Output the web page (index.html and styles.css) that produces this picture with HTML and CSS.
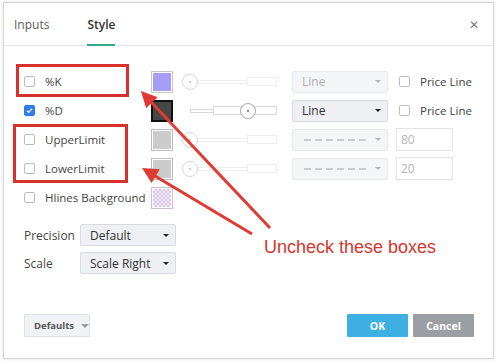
FILE: index.html
```html
<!DOCTYPE html>
<html lang="en">
<head>
    <meta charset="UTF-8">
    <title>Stochastic - Style</title>
    <link rel="stylesheet" href="styles.css">
</head>
<body>
    <div class="dialog">
        <div class="tabs">
            <span class="tab">Inputs</span>
            <span class="tab active">Style</span>
            <span class="close">&#x2715;</span>
        </div>

        <div class="content">
            <div class="row off">
                <label class="check"><span class="box"></span>%K</label>
                <span class="swatch purple"><i></i></span>
                <div class="slider">
                    <span class="thin" style="width: 57px"></span><span class="thick"></span>
                    <span class="knob" style="left: 0"></span>
                </div>
                <div class="select">Line<b class="caret"></b></div>
                <label class="check price"><span class="box"></span>Price Line</label>
            </div>
            <div class="row">
                <label class="check"><span class="box checked"><svg viewBox="0 0 12 12"><path d="M2.6 6.2l2.3 2.3 4.5-5" /></svg></span>%D</label>
                <span class="swatch dark"><i></i></span>
                <div class="slider">
                    <span class="thin" style="width: 23px"></span><span class="thick"></span>
                    <span class="knob" style="left: 58px"></span>
                </div>
                <div class="select">Line<b class="caret"></b></div>
                <label class="check price"><span class="box"></span>Price Line</label>
            </div>
            <div class="row off">
                <label class="check"><span class="box"></span>UpperLimit</label>
                <span class="swatch grey"><i></i></span>
                <div class="slider">
                    <span class="thin" style="width: 57px"></span><span class="thick"></span>
                    <span class="knob" style="left: 0"></span>
                </div>
                <div class="select"><span class="dashes"></span><b class="caret"></b></div>
                <span class="num">80</span>
            </div>
            <div class="row off">
                <label class="check"><span class="box"></span>LowerLimit</label>
                <span class="swatch grey"><i></i></span>
                <div class="slider">
                    <span class="thin" style="width: 57px"></span><span class="thick"></span>
                    <span class="knob" style="left: 0"></span>
                </div>
                <div class="select"><span class="dashes"></span><b class="caret"></b></div>
                <span class="num">20</span>
            </div>
            <div class="row">
                <label class="check"><span class="box"></span>Hlines Background</label>
                <span class="swatch checker"><i></i></span>
            </div>

            <div class="settings">
                <div class="setting">
                    <span class="setting-label">Precision</span>
                    <div class="select">Default<b class="caret"></b></div>
                </div>
                <div class="setting">
                    <span class="setting-label">Scale</span>
                    <div class="select">Scale Right<b class="caret"></b></div>
                </div>
            </div>
        </div>

        <div class="footer">
            <button class="btn defaults">Defaults<b class="caret"></b></button>
            <button class="btn ok">OK</button>
            <button class="btn cancel">Cancel</button>
        </div>
    </div>

    <!-- annotation layer -->
    <svg class="notes" width="500" height="363" viewBox="0 0 500 363">
        <rect x="17.5" y="65.5" width="110" height="30" />
        <rect x="14.5" y="125.5" width="112" height="56" />
        <line x1="270" y1="228" x2="151" y2="102" />
        <polygon points="141,91 157.7,97.2 146.1,108.2" />
        <line x1="252" y1="234" x2="155" y2="176" />
        <polygon points="142,168 159.8,169.3 151.6,183.1" />
    </svg>
    <div class="note-text">Uncheck these boxes</div>
</body>
</html>
```

FILE: styles.css
```css
* { box-sizing: border-box; margin: 0; padding: 0; }
body {
    width: 500px; height: 363px; overflow: hidden; position: relative;
    background: #ffffff; font-family: "Open Sans", "Noto Sans", sans-serif; color: #3c3c3c;
}
.dialog {
    margin: 2px 0 0 3px; width: 491px; height: 357px; background: #ffffff;
    border: 1px solid #d5d5d5; box-shadow: 0 0 3px rgba(0, 0, 0, 0.12);
    display: flex; flex-direction: column;
}

/* header */
.tabs {
    height: 43px; border-bottom: 1px solid #e2e4e8; display: flex; align-items: stretch; padding-left: 10px;
}
.tab { font-size: 12px; color: #5d5d5d; display: flex; align-items: center; margin-right: 38px; position: relative; }
.tab.active { color: #333333; font-weight: 600; }
.tab.active::after {
    content: ""; position: absolute; left: 0; right: 0; bottom: -1px; height: 2px; background: #34a88c;
}
.close { margin-left: auto; margin-right: 14px; align-self: center; font-size: 12px; color: #7a7a7a; }

/* style rows */
.content { padding: 21px 0 0 20px; }
.row { display: flex; align-items: center; height: 29px; }
.check { display: flex; align-items: center; gap: 10px; width: 127px; font-size: 11.5px; color: #444444; white-space: nowrap; }
.check.price { width: auto; }
.box {
    width: 11px; height: 11px; border: 1px solid #b9bdc3; border-radius: 2px; background: #ffffff; flex: none;
    display: flex; align-items: center; justify-content: center;
}
.box.checked { background: #2d7cf2; border-color: #2d7cf2; }
.box svg { width: 11px; height: 11px; fill: none; stroke: #ffffff; stroke-width: 1.8; }

.swatch { width: 22px; height: 22px; border: 1px solid #c6c6c6; padding: 1px; margin-right: 9px; flex: none; }
.swatch i { display: block; width: 100%; height: 100%; }
.swatch.purple i { background: #a59df6; }
.swatch.dark { border: 2px solid #111111; padding: 0; }
.swatch.dark i { background: #474747; }
.swatch.grey { border-color: #a8a8a8; }
.swatch.grey i { background: #bcbcbc; }
.swatch.checker { border-color: #cbbfd6; }
.swatch.checker i { background: repeating-conic-gradient(#d8c6e6 0 25%, #f1e9f6 0 50%) 0 0 / 4px 4px; }

.slider { width: 95px; height: 16px; margin-right: 15px; display: flex; align-items: center; position: relative; padding-left: 8px; }
.thin { height: 4px; border: 1px solid #d9d9d9; border-right: none; }
.thick { flex: 1; height: 9px; border: 1px solid #d9d9d9; }
.knob {
    position: absolute; top: 0; width: 16px; height: 16px; border: 1px solid #a9a9a9; border-radius: 50%; background: #ffffff;
    display: flex; align-items: center; justify-content: center;
}
.knob::after { content: ""; width: 2px; height: 2px; border-radius: 50%; background: #666666; }

.select {
    width: 96px; height: 22px; margin-right: 11px; flex: none; border: 1px solid #d7dadf; border-radius: 2px;
    background: #eef0f3; padding: 0 0 0 9px; font-size: 12px; color: #333333;
    display: flex; align-items: center; position: relative;
}
.caret {
    margin-left: auto; margin-right: 6px; width: 0; height: 0;
    border-left: 3px solid transparent; border-right: 3px solid transparent; border-top: 3px solid #222222;
}
.dashes {
    width: 62px; height: 2px; margin-left: 2px;
    background: repeating-linear-gradient(90deg, #9a9a9a 0 7px, transparent 7px 11px);
}
.num {
    width: 57px; height: 23px; margin-left: -3px; border: 1px solid #dcdcdc; font-size: 12px; color: #999999;
    display: flex; align-items: center; padding-left: 4px;
}
.row.off .select { background: #f4f5f7; border-color: #e6e8eb; color: #b0b0b0; }
.row.off .select .caret { border-top-color: #b5b5b5; }
.row.off .slider, .row.off .dashes { opacity: 0.45; }
.row.off .swatch.grey, .row.off .num { opacity: 0.75; }

/* precision / scale */
.settings { margin-top: 12px; display: flex; flex-direction: column; gap: 6px; }
.setting { display: flex; align-items: center; }
.setting-label { width: 56px; font-size: 12px; color: #444444; }

/* footer */
.footer { margin-top: auto; display: flex; align-items: center; padding: 0 19px 21px 20px; gap: 5px; }
.btn {
    height: 23px; width: 61px; border: none; border-radius: 1px; font-family: inherit; font-size: 10.5px; font-weight: 700;
    color: #ffffff; display: flex; align-items: center; justify-content: center;
}
.btn.defaults {
    width: 66px; margin-right: auto; background: #f1f2f5; border: 1px solid #dfe1e6; color: #555555;
    font-size: 9.5px; justify-content: flex-start; padding-left: 9px;
}
.btn.defaults .caret { margin-left: 7px; border-top-color: #9a9a9a; border-width: 4px 4px 0 4px; border-left-color: transparent; border-right-color: transparent; }
.btn.ok { background: #3eafe3; }
.btn.cancel { background: #9b9ea3; }

/* annotations */
.notes { position: absolute; top: 0; left: 0; pointer-events: none; }
.notes rect { fill: none; stroke: #d8302b; stroke-width: 3; }
.notes line { stroke: #df3a33; stroke-width: 3; }
.notes polygon { fill: #df3a33; }
.note-text {
    position: absolute; left: 264px; top: 238px; font-family: "Liberation Sans", Arial, sans-serif;
    font-size: 18px; line-height: 18px; color: #d4372e;
}
```
